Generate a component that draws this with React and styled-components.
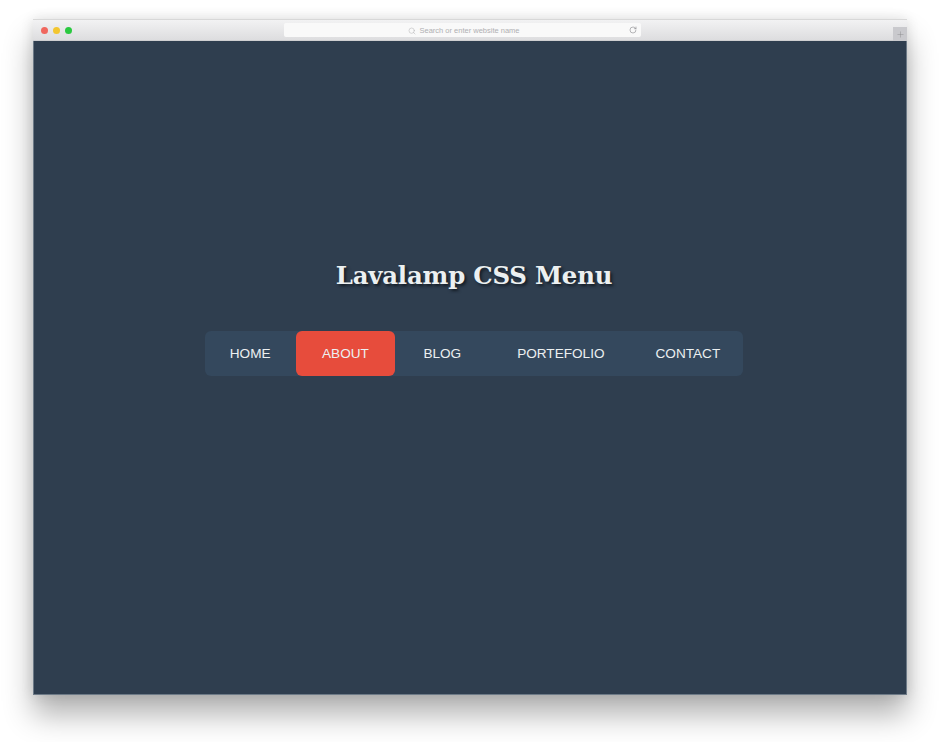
import React from "react"
import styled, { createGlobalStyle } from "styled-components"
import { Search, RotateCw, Plus } from "lucide-react"

const GlobalStyle = createGlobalStyle`
  html, body {
    margin: 0;
    padding: 0;
    background: #fff;
  }
`

const Page = styled.div`
  box-sizing: border-box;
  width: 940px;
  height: 742px;
  padding: 19px 33px 0;
  overflow: hidden;
`

const BrowserWindow = styled.div`
  display: flex;
  flex-direction: column;
  height: 676px;
  box-shadow: 0 20px 28px rgba(0, 0, 0, 0.3), 0 0 12px rgba(0, 0, 0, 0.12);
`

const TitleBar = styled.div`
  display: grid;
  grid-template-columns: 251px 357px 1fr;
  align-items: center;
  position: relative;
  box-sizing: border-box;
  height: 22px;
  background: linear-gradient(#f2f2f3, #dddddf);
  border-top: 1px solid #d8d8d8;
  border-bottom: 1px solid #cfcfd1;
`

const Dots = styled.div`
  display: flex;
  gap: 5px;
  padding-left: 8px;
`

const Dot = styled.span`
  width: 7px;
  height: 7px;
  border-radius: 50%;
  background: ${(p) => p.$color};
`

const AddressBar = styled.div`
  position: relative;
  display: flex;
  justify-content: center;
  align-items: center;
  gap: 3px;
  height: 14px;
  padding: 1px 0 0 3px;
  box-sizing: border-box;
  background: #f9f9f9;
  border-radius: 2px;
  color: #b0b0b2;
  font: 7.5px "Liberation Sans", Arial, sans-serif;
`

const Reload = styled.span`
  position: absolute;
  right: 4px;
  top: 3px;
  display: flex;
  color: #88888b;
`

const NewTab = styled.div`
  position: absolute;
  right: 0;
  bottom: -1px;
  display: flex;
  align-items: center;
  justify-content: center;
  width: 14px;
  height: 14px;
  background: #c9c9cd;
  color: #8a8a8e;
`

const Content = styled.main`
  flex: 1;
  display: flex;
  flex-direction: column;
  align-items: center;
  padding: 217px 0 0 8px;
  background: #2f3e4f;
  border: 1px solid #6d7a87;
  border-width: 0 1px 1px;
`

const Title = styled.h1`
  margin: 0 0 37px;
  color: #ecf0f1;
  font: bold 24.4px/36px "DejaVu Serif", Georgia, serif;
  letter-spacing: -0.2px;
  text-shadow: 2px 2px 3px #141c25;
`

const Menu = styled.nav`
  display: flex;
  height: 45px;
  background: #34485d;
  border-radius: 6px;
`

const MenuItem = styled.a`
  display: flex;
  align-items: center;
  padding: 0 ${(p) => p.$pad}px;
  color: #ecf0f1;
  font: 13.6px "Liberation Sans", Arial, sans-serif;
  border-radius: 6px;
  background: ${(p) => (p.$active ? "#e74c3c" : "transparent")};
`

const items = [
  { label: "HOME", pad: 25 },
  { label: "ABOUT", pad: 26.5, active: true },
  { label: "BLOG", pad: 28 },
  { label: "PORTEFOLIO", pad: 28 },
  { label: "CONTACT", pad: 23 },
]

export default function App() {
  return (
    <Page>
      <GlobalStyle />
      <BrowserWindow>
        <TitleBar>
          <Dots>
            <Dot $color="#f0675e" />
            <Dot $color="#f3c62f" />
            <Dot $color="#2ac940" />
          </Dots>
          <AddressBar>
            <Search size={8} strokeWidth={1.5} />
            <span>Search or enter website name</span>
            <Reload>
              <RotateCw size={8} strokeWidth={1.8} />
            </Reload>
          </AddressBar>
          <NewTab>
            <Plus size={9} strokeWidth={1.2} />
          </NewTab>
        </TitleBar>
        <Content>
          <Title>Lavalamp CSS Menu</Title>
          <Menu>
            {items.map((item) => (
              <MenuItem key={item.label} $pad={item.pad} $active={item.active}>
                {item.label}
              </MenuItem>
            ))}
          </Menu>
        </Content>
      </BrowserWindow>
    </Page>
  )
}
